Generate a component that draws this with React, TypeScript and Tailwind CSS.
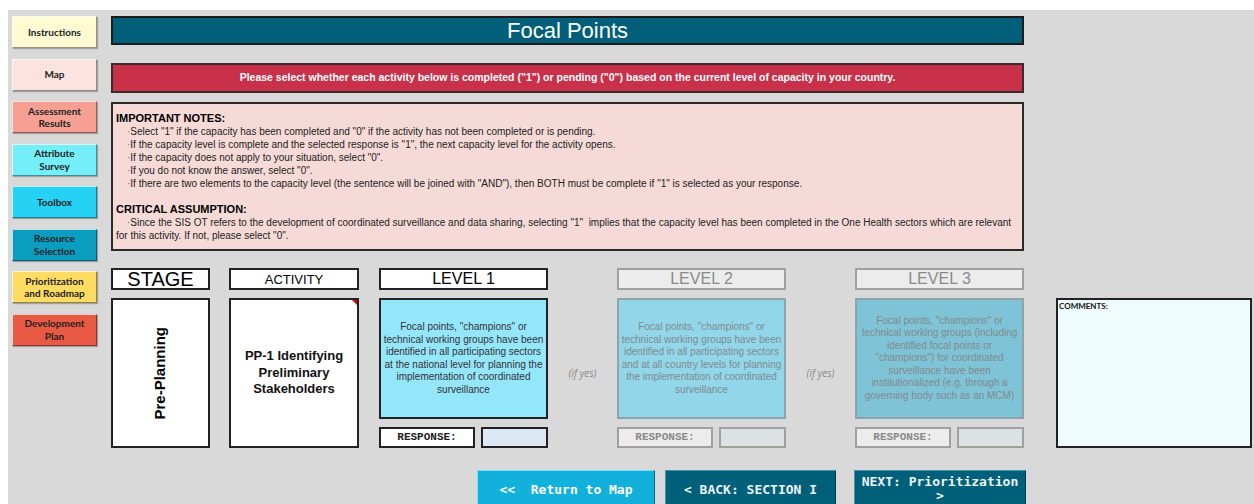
import React from "react";

const navButtons = [
  { label: ["Instructions"], bg: "bg-[#fefbd2]" },
  { label: ["Map"], bg: "bg-[#fde3df]" },
  { label: ["Assessment", "Results"], bg: "bg-[#f5a092]" },
  { label: ["Attribute", "Survey"], bg: "bg-[#74eef8]" },
  { label: ["Toolbox"], bg: "bg-[#25d2f3]" },
  { label: ["Resource", "Selection"], bg: "bg-[#0b9dc0]" },
  { label: ["Prioritization", "and Roadmap"], bg: "bg-[#fedc62]" },
  { label: ["Development", "Plan"], bg: "bg-[#e95a44]" },
];

const notes = [
  'Select "1" if the capacity has been completed and "0" if the activity has not been completed or is pending.',
  'If the capacity level is complete and the selected response is "1", the next capacity level for the activity opens.',
  'If the capacity does not apply to your situation, select "0".',
  'If you do not know the answer, select "0".',
  'If there are two elements to the capacity level (the sentence will be joined with "AND"), then BOTH must be complete if "1" is selected as your response.',
];

type Level = {
  title: string;
  text: string;
  active: boolean;
  box: string;
};

const levels: Level[] = [
  {
    title: "LEVEL 1",
    text: 'Focal points, "champions" or technical working groups have been identified in all participating sectors at the national level for planning the implementation of coordinated surveillance',
    active: true,
    box: "bg-[#94e6fb]",
  },
  {
    title: "LEVEL 2",
    text: 'Focal points, "champions" or technical working groups have been identified in all participating sectors and at all country levels for planning the implementation of coordinated surveillance',
    active: false,
    box: "bg-[#92d6e9]",
  },
  {
    title: "LEVEL 3",
    text: 'Focal points, "champions" or technical working groups (including identified focal points or "champions") for coordinated surveillance have been institutionalized (e.g. through a governing body such as an MCM)',
    active: false,
    box: "bg-[#7fc3d6]",
  },
];

function NavButton({ label, bg }: { label: string[]; bg: string }) {
  return (
    <button
      className={`${bg} flex h-[32px] w-[85px] shrink-0 flex-col items-center justify-center border border-t-white/70 border-l-white/70 border-r-black/40 border-b-black/40 shadow-[1px_1px_1px_rgba(0,0,0,0.25)] font-['Lato'] text-[10px] font-bold leading-[12.5px] text-[#222]`}
    >
      {label.map((l) => (
        <span key={l}>{l}</span>
      ))}
    </button>
  );
}

function LevelColumn({ level }: { level: Level }) {
  const on = level.active;
  return (
    <div className="flex w-[169px] shrink-0 flex-col">
      <div
        className={`flex h-[22px] items-center justify-center border-2 text-[16px] leading-none ${
          on ? "border-[#222] bg-white text-black" : "border-[#a0a0a0] bg-[#ececec] text-[#8a8a8a]"
        }`}
      >
        {level.title}
      </div>
      <div
        className={`${level.box} mt-[8px] flex h-[121px] items-center justify-center border-2 text-center text-[10px] leading-[12.5px] ${
          on ? "border-[#222] text-[#333]" : "border-[#8fa3aa] text-[#7f8a8f]"
        }`}
      >
        {level.text}
      </div>
      <div className="mt-[8px] flex h-[21px] gap-[6px]">
        <div
          className={`flex w-[96px] items-center justify-center border-2 font-['Liberation_Mono'] text-[11px] font-bold ${
            on ? "border-[#222] bg-white text-[#222]" : "border-[#a0a0a0] bg-[#ececec] text-[#8a8a8a]"
          }`}
        >
          RESPONSE:
        </div>
        <div
          className={`flex-1 border-2 ${
            on ? "border-[#222] bg-[#dce9f5]" : "border-[#a0a0a0] bg-[#dce1e4]"
          }`}
        />
      </div>
    </div>
  );
}

function IfYes() {
  return (
    <div className="flex w-[69px] shrink-0 items-center justify-center pt-[30px] font-['Open_Sans'] text-[10px] italic text-[#8a8a8a]">
      (if yes)
    </div>
  );
}

export default function App() {
  return (
    <div className="h-[504px] w-[1254px] overflow-hidden bg-white pl-[8px] pt-[10px] font-['Liberation_Sans',Arial,sans-serif]">
      <div className="flex h-full bg-[#d9d9d9]">
        <aside className="flex w-[103px] shrink-0 flex-col gap-[10.5px] pl-[4px] pt-[6px]">
          {navButtons.map((b) => (
            <NavButton key={b.label.join(" ")} label={b.label} bg={b.bg} />
          ))}
        </aside>

        <main className="shrink-0 pt-[6px]">
          <div className="flex h-[29px] w-[913px] items-center justify-center border-2 border-[#1c1c1c] bg-[#015f79] text-[22px] leading-none text-white">
            Focal Points
          </div>

          <div className="mt-[18px] flex h-[30px] w-[913px] items-center justify-center border-2 border-[#3b2b2d] bg-[#c9304a] text-[10.5px] font-bold text-white">
            Please select whether each activity below is completed ("1") or pending ("0") based on the current level of capacity in your country.
          </div>

          <div className="mt-[9px] h-[149px] w-[913px] border-2 border-[#2a2a2a] bg-[#f6dad7] px-[3px] pt-[8px] text-[10px] leading-[13px] text-[#222]">
            <p className="text-[11px] font-bold text-black">IMPORTANT NOTES:</p>
            <ul>
              {notes.map((n) => (
                <li key={n} className="pl-[11px]">
                  <span className="text-[#777]">·</span>
                  {n}
                </li>
              ))}
            </ul>
            <p className="mt-[13px] text-[11px] font-bold text-black">CRITICAL ASSUMPTION:</p>
            <p className="indent-[11px]">
              <span className="text-[#777]">·</span>
              Since the SIS OT refers to the development of coordinated surveillance and data sharing, selecting "1"&nbsp; implies that the capacity level has been completed in the One Health sectors which are relevant
              <br />
              for this activity. If not, please select "0".
            </p>
          </div>

          <div className="mt-[17px] flex">
            <div className="flex w-[99px] shrink-0 flex-col">
              <div className="flex h-[22px] items-center justify-center border-2 border-[#222] bg-white text-[20px] leading-none">
                STAGE
              </div>
              <div className="mt-[8px] flex h-[150px] items-center justify-center border-2 border-[#222] bg-white">
                <span className="-rotate-90 whitespace-nowrap text-[15px] font-bold">Pre-Planning</span>
              </div>
            </div>

            <div className="ml-[19px] flex w-[130px] shrink-0 flex-col">
              <div className="flex h-[22px] items-center justify-center border-2 border-[#222] bg-white text-[13px] leading-none">
                ACTIVITY
              </div>
              <div className="relative mt-[8px] flex h-[150px] items-center justify-center border-2 border-[#222] bg-white px-[6px] text-center text-[13px] font-bold leading-[16.5px] text-[#111]">
                <span className="absolute right-0 top-0 h-0 w-0 border-l-[5px] border-t-[5px] border-l-transparent border-t-[#e00000]" />
                PP-1 Identifying Preliminary Stakeholders
              </div>
            </div>

            <div className="ml-[20px] flex">
              <LevelColumn level={levels[0]} />
              <IfYes />
              <LevelColumn level={levels[1]} />
              <IfYes />
              <LevelColumn level={levels[2]} />
            </div>

            <div className="ml-[32px] mt-[30px] h-[150px] w-[196px] shrink-0 border-2 border-[#222] bg-[#eefcfe] px-[1px] pt-[2px] font-['Lato'] text-[8px] font-bold leading-none text-[#111]">
              COMMENTS:
            </div>
          </div>

          <div className="ml-[366px] mt-[22px] flex gap-[10px] font-['DejaVu_Sans_Mono'] text-[13px] font-bold text-white">
            <button className="flex h-[40px] w-[178px] items-start justify-center whitespace-pre border border-t-[#7fe0f8] border-l-[#7fe0f8] border-r-[#0a6a86] border-b-[#0a6a86] bg-[#11b1dc] pt-[9px]">
              {"<<  Return to Map"}
            </button>
            <button className="flex h-[40px] w-[171px] items-start justify-center border border-t-[#3f93aa] border-l-[#3f93aa] border-r-[#023f52] border-b-[#023f52] bg-[#016079] pt-[9px] text-[#eaf3f6]">
              {"< BACK: SECTION I"}
            </button>
            <button className="ml-[8px] flex h-[40px] w-[172px] flex-col items-center border border-t-[#3f93aa] border-l-[#3f93aa] border-r-[#023f52] border-b-[#023f52] bg-[#016079] pt-[4px] leading-[14px] text-[#eaf3f6]">
              <span>NEXT: Prioritization</span>
              <span>&gt;</span>
            </button>
          </div>
        </main>
      </div>
    </div>
  );
}
